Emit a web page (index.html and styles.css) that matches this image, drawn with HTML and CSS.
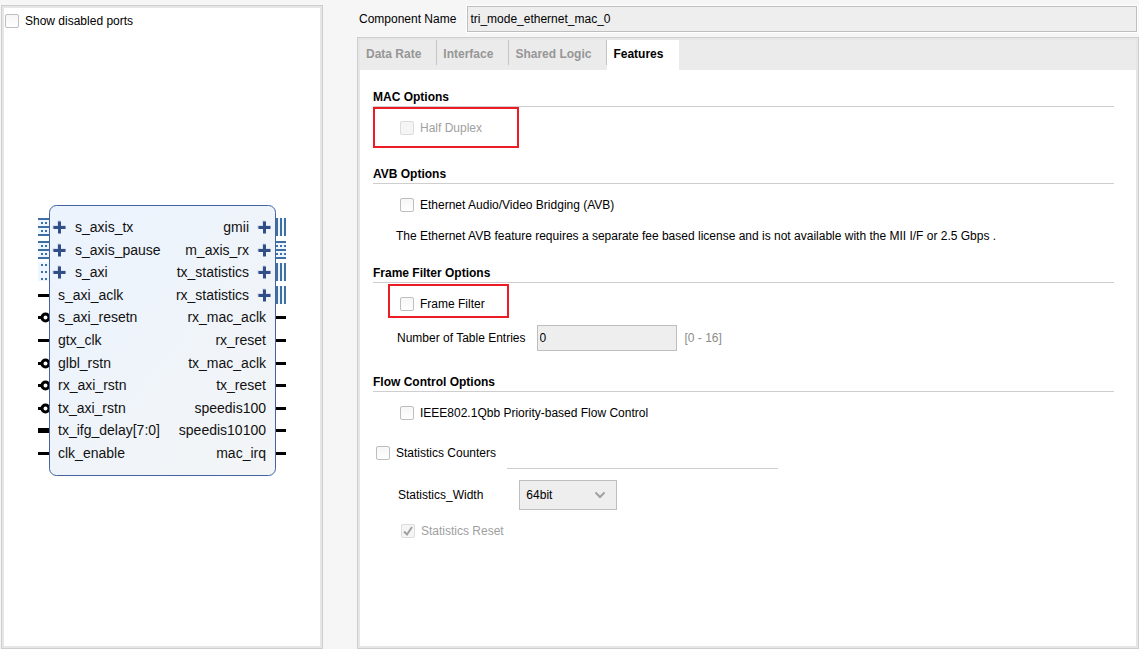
FILE: index.html
```html
<!DOCTYPE html>
<html lang="en">
<head>
<meta charset="utf-8">
<title>Component configuration</title>
<link rel="stylesheet" href="styles.css">
</head>
<body>
<main class="workspace">
  <section class="frame preview" aria-label="Block symbol">
    <label class="check preview-toggle"><input type="checkbox">Show disabled ports</label>
    <div class="canvas">
      <svg class="symbol" width="249" height="272" viewBox="0 0 249 272" role="img" aria-label="Ethernet MAC symbol">
        <defs>
          <linearGradient id="body" x1="0" y1="0" x2="1" y2="1">
            <stop offset="0" stop-color="#ebf3fe"/>
            <stop offset="1" stop-color="#f3f5f6"/>
          </linearGradient>
          <g id="plus">
            <path d="M-7-2H-2V-7H1V-2H6V1H-7Z" fill="#c3cde0"/>
            <path d="M-6 0H6M0-6V6" stroke="#304f88" stroke-width="3"/>
          </g>
          <g id="stream">
            <path d="M0-9H11V9H0Z" fill="#edf6ff"/>
            <path d="M0-8H11M0 0H11M0 8H11" stroke="#3e6fa3" stroke-width="2"/>
            <path d="M3-4H9M3 4H9" stroke="#3e6fa3" stroke-width="2" stroke-dasharray="2 2"/>
          </g>
          <g id="stream-out">
            <path d="M0-9H10V9H0Z" fill="#edf6ff"/>
            <path d="M0-8H10M0 0H10M0 8H10" stroke="#3e6fa3" stroke-width="2"/>
            <path d="M0-4H10M0 4H10" stroke="#3e6fa3" stroke-width="2" stroke-dasharray="2 2"/>
          </g>
          <g id="dots">
            <path d="M0-10H11V9H0Z" fill="#edf6ff"/>
            <path d="M3-7H9M3 0H9M3 7H9" stroke="#3e6fa3" stroke-width="2" stroke-dasharray="2 2"/>
          </g>
          <g id="bus">
            <path d="M0-9H10V9H0Z" fill="#edf6ff"/>
            <path d="M1-9V9M5-9V9M9-9V9" stroke="#3e6fa3" stroke-width="2"/>
          </g>
          <path id="pin" d="M0 0H11" stroke="#000" stroke-width="3"/>
          <g id="inverted" fill="none" stroke="#000" stroke-width="3">
            <path d="M0 0H4"/>
            <circle cx="7.500" cy="0" r="3.500"/>
          </g>
        </defs>
        <use href="#stream" x="0" y="23"/>
        <use href="#stream" x="0" y="46"/>
        <use href="#dots" x="0" y="68"/>
        <use href="#pin" x="0" y="91.5"/>
        <use href="#inverted" x="0" y="113.5"/>
        <use href="#pin" x="0" y="136.5"/>
        <use href="#inverted" x="0" y="159.5"/>
        <use href="#inverted" x="0" y="181.5"/>
        <use href="#inverted" x="0" y="204.5"/>
        <path d="M0 226.500H11" stroke="#000" stroke-width="5"/>
        <use href="#pin" x="0" y="249.5"/>
        <use href="#bus" x="238" y="23"/>
        <use href="#stream-out" x="238" y="46"/>
        <use href="#bus" x="238" y="68"/>
        <use href="#bus" x="238" y="91"/>
        <path d="M238 113.500H248M238 136.500H248M238 159.500H248M238 181.500H248M238 204.500H248M238 226.500H248M238 249.500H248" stroke="#000" stroke-width="3"/>
        <rect x="11.5" y="1.500" width="226" height="270" rx="7" fill="url(#body)" stroke="#4663a0"/>
        <use href="#plus" x="21.500" y="23.500"/>
        <use href="#plus" x="21.500" y="46.500"/>
        <use href="#plus" x="21.500" y="68.500"/>
        <use href="#plus" x="226.500" y="23.500"/>
        <use href="#plus" x="226.500" y="46.500"/>
        <use href="#plus" x="226.500" y="68.500"/>
        <use href="#plus" x="226.500" y="91.500"/>
        <g class="port">
          <text x="37" y="28">s_axis_tx</text>
          <text x="37" y="51">s_axis_pause</text>
          <text x="37" y="73">s_axi</text>
          <text x="20" y="96">s_axi_aclk</text>
          <text x="20" y="118">s_axi_resetn</text>
          <text x="20" y="141">gtx_clk</text>
          <text x="20" y="164">glbl_rstn</text>
          <text x="20" y="186">rx_axi_rstn</text>
          <text x="20" y="209">tx_axi_rstn</text>
          <text x="20" y="231">tx_ifg_delay[7:0]</text>
          <text x="20" y="254">clk_enable</text>
        </g>
        <g class="port port-out">
          <text x="211" y="28">gmii</text>
          <text x="211" y="51">m_axis_rx</text>
          <text x="211" y="73">tx_statistics</text>
          <text x="211" y="96">rx_statistics</text>
          <text x="228" y="118">rx_mac_aclk</text>
          <text x="228" y="141">rx_reset</text>
          <text x="228" y="164">tx_mac_aclk</text>
          <text x="228" y="186">tx_reset</text>
          <text x="228" y="209">speedis100</text>
          <text x="228" y="231">speedis10100</text>
          <text x="228" y="254">mac_irq</text>
        </g>
      </svg>
    </div>
  </section>

  <div class="settings">
    <div class="name-row">
      <label for="component-name">Component Name</label>
      <input class="field" id="component-name" type="text" value="tri_mode_ethernet_mac_0">
    </div>
    <section class="frame options">
      <div class="tabs" role="tablist">
        <button class="tab" role="tab" type="button">Data Rate</button>
        <button class="tab" role="tab" type="button">Interface</button>
        <button class="tab" role="tab" type="button">Shared Logic</button>
        <button class="tab tab-active" role="tab" type="button" aria-selected="true">Features</button>
      </div>
      <div class="page">
        <section class="group group-mac">
          <h2>MAC Options</h2>
          <div class="callout callout-duplex">
            <label class="check check-off"><input type="checkbox" disabled>Half Duplex</label>
          </div>
        </section>
        <section class="group group-avb">
          <h2>AVB Options</h2>
          <label class="check"><input type="checkbox">Ethernet Audio/Video Bridging (AVB)</label>
          <p>The Ethernet AVB feature requires a separate fee based license and is not available with the MII I/F or 2.5 Gbps .</p>
        </section>
        <section class="group group-filter">
          <h2>Frame Filter Options</h2>
          <div class="callout callout-filter">
            <label class="check"><input type="checkbox">Frame Filter</label>
          </div>
          <div class="entries">
            <label for="entries">Number of Table Entries</label>
            <input class="field" id="entries" type="text" value="0">
            <span class="range">[0 - 16]</span>
          </div>
        </section>
        <section class="group group-flow">
          <h2>Flow Control Options</h2>
          <label class="check"><input type="checkbox">IEEE802.1Qbb Priority-based Flow Control</label>
        </section>
        <section class="statistics">
          <div class="statistics-head">
            <label class="check"><input type="checkbox">Statistics Counters</label>
            <span class="rule"></span>
          </div>
          <div class="width-row">
            <label for="stat-width">Statistics_Width</label>
            <span class="select">
              <select id="stat-width"><option>64bit</option></select>
              <svg class="chevron" width="12" height="8" viewBox="0 0 12 8" aria-hidden="true"><path d="M1.500 1.500L6 6L10.500 1.500" fill="none" stroke="#a0a0a0" stroke-width="2"/></svg>
            </span>
          </div>
          <label class="check check-off statistics-reset"><span class="tick"><input type="checkbox" checked disabled><svg width="14" height="14" viewBox="0 0 14 14" aria-hidden="true"><path d="M3 7.500L6 10.500L11 3" fill="none" stroke="#a0a0a0" stroke-width="2"/></svg></span>Statistics Reset</label>
        </section>
      </div>
    </section>
  </div>
</main>
</body>
</html>
```
FILE: styles.css
```css
* {
  box-sizing: border-box;
}

body {
  margin: 0;
  background: #f6f6f6;
  color: #000;
  font: 12px/16px "Liberation Sans", Arial, sans-serif;
}

input,
select,
button {
  font: inherit;
  color: inherit;
}

.workspace {
  display: grid;
  grid-template-columns: minmax(0, 322fr) minmax(0, 782fr);
  gap: 34px;
  min-height: 100vh;
  padding-left: 1px;
}

.frame {
  border: 1px solid #cecece;
  box-shadow: inset 0 0 0 2px #e6e6e6;
  padding: 2px;
  background: #fff;
}

.preview {
  display: flex;
  flex-direction: column;
  margin-top: 5px;
}

.preview-toggle {
  padding: 5px 1px;
}

.canvas {
  flex: 1;
  display: flex;
  align-items: center;
  justify-content: center;
}

.port {
  font-size: 14px;
  fill: #111;
}

.port-out {
  text-anchor: end;
}

/* Check boxes */
.check {
  display: flex;
  align-items: center;
  gap: 6px;
  height: 18px;
}

.preview-toggle.check {
  height: 26px;
}

.check input {
  appearance: none;
  flex: none;
  width: 14px;
  height: 14px;
  margin: 0;
  border: 1px solid #bebebe;
  border-radius: 2px;
  background: linear-gradient(#f6f6f6, #fff);
}

.check-off {
  color: #a0a0a0;
}

.check-off input {
  border-color: #dcdcdc;
  background: #f5f5f5;
}

.tick {
  display: grid;
}

.tick > * {
  grid-area: 1 / 1;
}

/* Settings column */
.settings {
  display: flex;
  flex-direction: column;
  padding-top: 6px;
}

.name-row {
  display: flex;
  align-items: center;
  gap: 11px;
  padding: 0 2px;
  margin-bottom: 5px;
}

.field {
  min-width: 0;
  height: 26px;
  padding: 0 2px;
  border: 1px solid #bebebe;
  border-radius: 0;
  background: #eee;
}

.name-row .field {
  flex: 1;
  outline: 1px solid #fff;
}

.options {
  flex: 1;
}

.tabs {
  display: flex;
  align-items: flex-start;
  height: 30px;
  background: #ebebeb;
}

.tab {
  height: 25px;
  padding: 3px 15px 0 6px;
  border: 0;
  border-right: 1px solid #c4c4c4;
  background: none;
  color: #969696;
  font-weight: bold;
}

.tab-active {
  height: 30px;
  padding: 0 16px 2px 6px;
  border: 0;
  background: #fff;
  color: #000;
}

.page {
  padding: 19px 22px 20px 13px;
}

.group h2 {
  margin: 0;
  padding-bottom: 1px;
  border-bottom: 1px solid #cecece;
  font-size: 12px;
  line-height: 16px;
}

.group > .check {
  margin: 12px 0 0 27px;
}

.group p {
  margin: 14px 0 0 23px;
}

.group-mac {
  margin-bottom: 18px;
}

.group-avb {
  margin-bottom: 21px;
}

.group-filter {
  margin-bottom: 23px;
}

.callout {
  width: fit-content;
  border: 2px solid #ed1c24;
}

.callout-duplex {
  padding: 10px 35px 9px 25px;
}

.callout-filter {
  margin: 1px 0 0 15px;
  padding: 9px 22px 3px 10px;
}

.entries {
  display: flex;
  align-items: center;
  gap: 8px;
  margin: 7px 0 0 24px;
}

.entries .field {
  width: 140px;
  margin-left: 3px;
}

.range {
  color: #8c8c8c;
}

.statistics-head {
  display: flex;
  gap: 11px;
  margin: 22px 0 0 3px;
}

.rule {
  width: 271px;
  height: 25px;
  border-bottom: 1px solid #cecece;
}

.width-row {
  display: flex;
  align-items: center;
  gap: 36px;
  margin: 11px 0 0 25px;
}

.select {
  display: grid;
  align-items: center;
}

.select > * {
  grid-area: 1 / 1;
}

.select select {
  appearance: none;
  width: 98px;
  height: 30px;
  padding: 0 6px;
  border: 1px solid #bebebe;
  border-radius: 0;
  background: #eee;
}

.chevron {
  justify-self: end;
  margin-right: 11px;
  pointer-events: none;
}

.statistics-reset {
  margin: 12px 0 0 28px;
}
```
